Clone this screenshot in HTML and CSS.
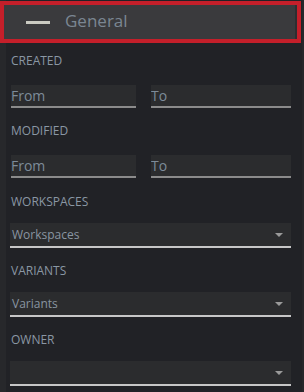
FILE: index.html
```html
<!DOCTYPE html>
<html lang="en">
<head>
  <meta charset="UTF-8" />
  <meta name="viewport" content="width=device-width, initial-scale=1.0" />
  <title>Filters</title>
  <link rel="stylesheet" href="styles.css">
</head>
<body>
  <div class="panel">
    <div class="panel-header">
      <span class="dash"></span>
      <span class="title">General</span>
    </div>

    <div class="filters">
      <div class="field">
        <div class="label">Created</div>
        <div class="range">
          <input type="text" class="text-input" placeholder="From" />
          <input type="text" class="text-input wide" placeholder="To" />
        </div>
      </div>

      <div class="field">
        <div class="label">Modified</div>
        <div class="range">
          <input type="text" class="text-input" placeholder="From" />
          <input type="text" class="text-input wide" placeholder="To" />
        </div>
      </div>

      <div class="field">
        <div class="label compact">Workspaces</div>
        <div class="select">
          <span class="select-text">Workspaces</span>
          <span class="caret"></span>
        </div>
      </div>

      <div class="field">
        <div class="label compact">Variants</div>
        <div class="select">
          <span class="select-text">Variants</span>
          <span class="caret"></span>
        </div>
      </div>

      <div class="field">
        <div class="label compact">Owner</div>
        <div class="select">
          <span class="select-text"></span>
          <span class="caret"></span>
        </div>
      </div>
    </div>
  </div>
</body>
</html>
```

FILE: styles.css
```css
body {
  margin: 0;
  padding: 0;
  background: #212226;
  font-family: "Open Sans", Arial, sans-serif;
}

.panel {
  width: 304px;
  height: 392px;
  background: linear-gradient(to right, #27282b 0, #27282b 6px, #212226 6px, #212226 302px, #26272a 302px);
  overflow: hidden;
}

.panel-header {
  display: flex;
  align-items: center;
  width: 293px;
  height: 34px;
  margin-top: 1px;
  border: 4px solid #c41f2a;
  background: #3a3a3d;
  box-shadow: inset -2px 0 0 #2e2e31;
}

.dash {
  width: 24px;
  height: 3px;
  margin-left: 22px;
  background: #cacac2;
}

.title {
  margin-left: 15px;
  font-size: 17px;
  line-height: 20px;
  margin-top: -2px;
  color: #7b8692;
}

.filters {
  padding: 10px 13px 0 10px;
}

.field {
  margin-bottom: 15px;
}

.field:nth-child(2) {
  margin-bottom: 16px;
}

.label {
  font-size: 12px;
  line-height: 16px;
  text-transform: uppercase;
  color: #8a97a4;
  margin-left: 1px;
  margin-bottom: 16px;
}

.label.compact {
  margin-bottom: 13px;
}

.range {
  display: flex;
  gap: 15px;
  margin-left: 1px;
}

.text-input {
  width: 125px;
  height: 21px;
  box-sizing: content-box;
  padding: 0;
  border: none;
  border-bottom: 2px solid #8b8b8b;
  background: #2b2c2e;
  font-family: "Open Sans", Arial, sans-serif;
  font-size: 14px;
  color: #c0c0c0;
  outline: none;
}

.text-input.wide {
  width: 140px;
}

.text-input::placeholder {
  color: #7d8b99;
}

.select {
  display: flex;
  align-items: center;
  justify-content: space-between;
  height: 23px;
  padding: 0 8px 0 2px;
  background: #2b2c2e;
  border-bottom: 2px solid #c7c7c7;
}

.select-text {
  font-size: 12px;
  color: #8995a1;
}

.caret {
  width: 0;
  height: 0;
  border-left: 4px solid transparent;
  border-right: 4px solid transparent;
  border-top: 4px solid #9a9a9a;
}
```
